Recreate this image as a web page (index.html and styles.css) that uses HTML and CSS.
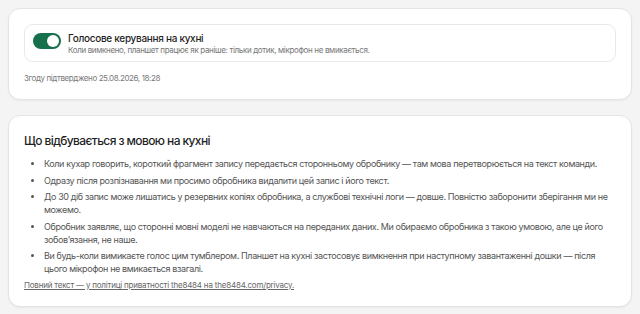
FILE: index.html
```html
<!DOCTYPE html>
<html lang="uk">
<head>
    <meta charset="UTF-8">
    <meta name="viewport" content="width=device-width, initial-scale=1.0">
    <title>Голосове керування</title>
    <link rel="stylesheet" href="styles.css">
</head>
<body>
    <div class="card">
        <div class="toggle-row">
            <span class="switch on"><span class="knob"></span></span>
            <div class="toggle-text">
                <div class="toggle-title">Голосове керування на кухні</div>
                <div class="toggle-sub">Коли вимкнено, планшет працює як раніше: тільки дотик, мікрофон не вмикається.</div>
            </div>
        </div>
        <p class="consent">Згоду підтверджено 25.08.2026, 18:28</p>
    </div>

    <div class="card">
        <h2>Що відбувається з мовою на кухні</h2>
        <ul class="facts">
            <li>Коли кухар говорить, короткий фрагмент запису передається сторонньому обробнику — там мова перетворюється на текст команди.</li>
            <li>Одразу після розпізнавання ми просимо обробника видалити цей запис і його текст.</li>
            <li>До 30 діб запис може лишатись у резервних копіях обробника, а службові технічні логи — довше. Повністю заборонити зберігання ми не можемо.</li>
            <li>Обробник заявляє, що сторонні мовні моделі не навчаються на переданих даних. Ми обираємо обробника з такою умовою, але це його зобов’язання, не наше.</li>
            <li>Ви будь-коли вимикаєте голос цим тумблером. Планшет на кухні застосовує вимкнення при наступному завантаженні дошки — після цього мікрофон не вмикається взагалі.</li>
        </ul>
        <a class="policy" href="#">Повний текст — у політиці приватності the8484 на the8484.com/privacy.</a>
    </div>
</body>
</html>
```

FILE: styles.css
```css
body {
    margin: 0;
    padding: 8px;
    background: #f4f4f4;
    font-family: Inter, "Noto Sans", sans-serif;
    color: #222;
}
.card {
    background: #fff;
    border: 1px solid #e4e4e4;
    border-radius: 12px;
    box-shadow: 0 1px 2px rgba(0, 0, 0, 0.05);
    padding: 15px;
    margin-bottom: 15px;
}
.card:last-child {
    margin-bottom: 0;
}
.toggle-row {
    display: flex;
    align-items: flex-start;
    gap: 7px;
    border: 1px solid #e8e8e8;
    border-radius: 9px;
    padding: 7px 8px 5px;
}
.switch {
    flex: none;
    width: 28px;
    height: 16px;
    margin-top: 1px;
    border-radius: 8px;
    background: #17704c;
    display: flex;
    align-items: center;
    justify-content: flex-end;
    padding: 0 2px;
    box-sizing: border-box;
}
.knob {
    width: 12px;
    height: 12px;
    border-radius: 50%;
    background: #fff;
}
.toggle-title {
    font-size: 10px;
    font-weight: 500;
    letter-spacing: -0.3px;
    line-height: 13px;
    color: #1f1f1f;
}
.toggle-sub {
    font-size: 8px;
    letter-spacing: -0.35px;
    line-height: 11px;
    color: #777;
}
.consent {
    margin: 10px 0 0;
    font-size: 8px;
    letter-spacing: -0.4px;
    line-height: 12px;
    color: #7a7a7a;
}
h2 {
    margin: 0 0 7px;
    font-size: 12px;
    font-weight: 500;
    letter-spacing: -0.6px;
    line-height: 19px;
    color: #1f1f1f;
}
.facts {
    margin: 0;
    padding-left: 20px;
    font-size: 9px;
    letter-spacing: -0.38px;
    line-height: 13px;
    color: #555;
}
.facts li {
    margin-bottom: 3.5px;
}
.facts li:last-child {
    margin-bottom: 0;
}
.policy {
    display: block;
    margin-top: 4px;
    font-size: 8px;
    letter-spacing: -0.2px;
    line-height: 12px;
    color: #666;
}
```
